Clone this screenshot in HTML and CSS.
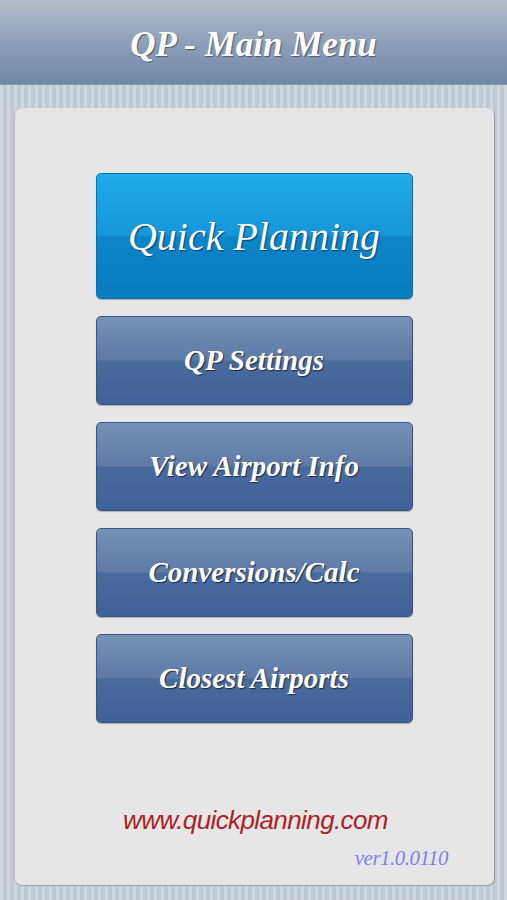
FILE: index.html
```html
<!DOCTYPE html>
<html lang="en">
<head>
    <meta charset="UTF-8">
    <meta name="viewport" content="width=device-width, initial-scale=1.0">
    <title>QP - Main Menu</title>
    <link rel="stylesheet" href="styles.css">
</head>
<body>
    <div class="header">
        <h1>QP - Main Menu</h1>
    </div>
    <div class="content">
        <div class="panel">
            <nav class="menu">
                <a href="#" class="btn btn-main">Quick Planning</a>
                <a href="#" class="btn">QP Settings</a>
                <a href="#" class="btn">View Airport Info</a>
                <a href="#" class="btn">Conversions/Calc</a>
                <a href="#" class="btn">Closest Airports</a>
            </nav>
            <div class="footer">
                <p class="site">www.quickplanning.com</p>
                <p class="version">ver1.0.0110</p>
            </div>
        </div>
    </div>
</body>
</html>
```
FILE: styles.css
```css
* {
    box-sizing: border-box;
}

body {
    margin: 0;
    width: 507px;
    height: 900px;
    font-family: 'Liberation Serif', 'Times New Roman', serif;
    background-color: #c6cfd9;
    background-image: repeating-linear-gradient(90deg, rgba(255, 255, 255, 0.18) 0px, rgba(255, 255, 255, 0.18) 3px, rgba(0, 0, 0, 0.03) 3px, rgba(0, 0, 0, 0.03) 7px);
    overflow: hidden;
}

.header {
    height: 85px;
    background: linear-gradient(#b3bfcd 0%, #95a6bc 40%, #6f86a6 100%);
    display: flex;
    justify-content: center;
    align-items: center;
    border-bottom: 1px solid #8394ab;
}

.header h1 {
    margin: 6px 0 0 0;
    color: #fff;
    font-size: 35px;
    font-style: italic;
    font-weight: bold;
    text-shadow: 1px 1px 1px #4a5a70;
}

.content {
    padding: 23px 13px 15px 15px;
}

.panel {
    height: 777px;
    background: #e6e6e6;
    border-radius: 7px;
    box-shadow: 1px 1px 1px #9a9a9a, -1px 0 1px #b8b8b8;
    display: flex;
    flex-direction: column;
    align-items: center;
    padding-top: 65px;
}

.menu {
    display: flex;
    flex-direction: column;
    gap: 17px;
    width: 317px;
    margin-left: -1px;
}

.btn {
    display: flex;
    justify-content: center;
    align-items: center;
    height: 89px;
    border-radius: 5px;
    border: 1px solid #3a5680;
    color: #fff;
    text-decoration: none;
    font-size: 29px;
    font-style: italic;
    font-weight: bold;
    text-shadow: 1px 1px 1px #1c2c44;
    background: linear-gradient(#7790b6 0%, #5e7aa5 49%, #4a6a9c 51%, #40629a 100%);
    box-shadow: 0 1px 1px rgba(0, 0, 0, 0.25);
}

.btn-main {
    height: 126px;
    font-size: 40px;
    font-weight: normal;
    border-color: #0a6fab;
    text-shadow: 1px 1px 1px #0b3f66;
    background: linear-gradient(#22aaea 0%, #1596d9 49%, #0b84c8 51%, #0a7cc0 100%);
}

.footer {
    margin-top: auto;
    width: 100%;
    padding: 0 46px 14px 0;
    display: flex;
    flex-direction: column;
    align-items: flex-end;
}

.site {
    margin: 0 0 0 48px;
    align-self: center;
    font-family: 'Liberation Sans', Arial, sans-serif;
    font-style: italic;
    font-size: 26px;
    color: #ad1f25;
    letter-spacing: -0.6px;
}

.version {
    margin: 10px 0 0 0;
    font-style: italic;
    font-size: 21px;
    color: #7e7ef0;
    letter-spacing: -0.5px;
}
```
